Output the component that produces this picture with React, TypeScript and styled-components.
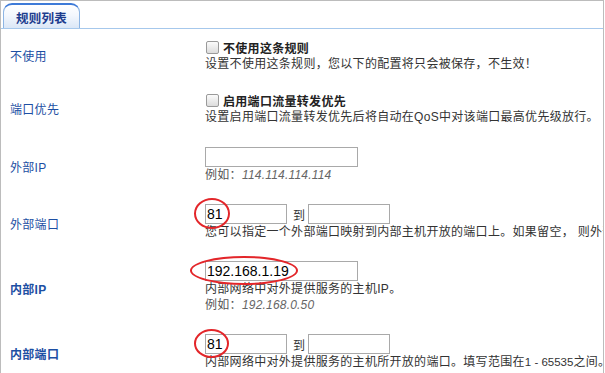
import React from "react";
import styled, { createGlobalStyle } from "styled-components";

const GlobalStyle = createGlobalStyle`
  html, body {
    margin: 0;
    padding: 0;
    background: #ffffff;
  }
  body {
    font-family: "Liberation Sans", "Noto Sans CJK SC", sans-serif;
    font-size: 12px;
  }
`;

const Panel = styled.div`
  width: 602px;
  height: 380px;
  border: 1px solid #bcbcbc;
  border-bottom: none;
  overflow: hidden;
  background: #fff;
`;

const TabBar = styled.div`
  height: 28px;
  padding: 2px 0 0 2px;
  box-sizing: border-box;
  border-bottom: 1px solid #a6c8ec;
  display: flex;
  align-items: flex-end;
`;

const Tab = styled.div`
  width: 77px;
  height: 25px;
  box-sizing: border-box;
  border: 1px solid #8db5e4;
  border-top: 2px solid #3d7ad8;
  border-bottom: none;
  border-radius: 9px 9px 0 0;
  background: linear-gradient(#ffffff 0%, #f3f7fd 45%, #dbe7f7 100%);
  display: flex;
  align-items: center;
  justify-content: center;
  padding-top: 1px;
  font-family: "Noto Sans CJK SC", sans-serif;
  font-weight: bold;
  font-size: 12.5px;
  color: #1c3c8e;
  letter-spacing: 0.3px;
`;

const Form = styled.div`
  display: grid;
  grid-template-columns: 204px 1fr;
`;

const Label = styled.div<{ $strong?: boolean; $low?: boolean }>`
  display: flex;
  align-items: center;
  padding-left: 9px;
  padding-top: ${(p) => (p.$low ? 6 : 0)}px;
  color: #1d4fa3;
  font-weight: ${(p) => (p.$strong ? "bold" : "normal")};
  letter-spacing: 0.3px;
`;

const Field = styled.div`
  padding: 9px 0;
  min-width: 0;
  white-space: nowrap;
  color: #333;
  letter-spacing: 0.3px;
`;

const Line = styled.div<{ $muted?: boolean; $h?: number }>`
  line-height: ${(p) => p.$h ?? 16}px;
  color: ${(p) => (p.$muted ? "#555" : "#333")};
`;

const CheckLine = styled.label`
  display: flex;
  align-items: center;
  gap: 4px;
  height: 18px;
  font-weight: bold;
  color: #222;
`;

const Box = styled.span`
  width: 11px;
  height: 11px;
  margin-left: 1px;
  border: 1px solid #9a9a9a;
  border-radius: 2px;
  background: linear-gradient(#fbfbfb, #dcdcdc);
`;

const Inputs = styled.div`
  display: flex;
  align-items: center;
  padding-top: 3px;
  height: 20px;
`;

const Slot = styled.span`
  position: relative;
  display: inline-flex;
`;

const TextBox = styled.input<{ $w: number }>`
  width: ${(p) => p.$w}px;
  height: 20px;
  box-sizing: border-box;
  border: 1px solid #a9a9a9;
  padding: 0 1px;
  margin: 0;
  font-family: "Liberation Sans", sans-serif;
  font-size: 14px;
  color: #000;
  background: #fff;
  outline: none;
`;

const To = styled.span`
  margin: 0 3px 0 6px;
  color: #333;
`;

const Example = styled.span`
  font-style: italic;
  color: #666;
  letter-spacing: 0.2px;
`;

const Mark = styled.span<{ $l: number; $t: number; $w: number; $h: number }>`
  position: absolute;
  left: ${(p) => p.$l}px;
  top: ${(p) => p.$t}px;
  width: ${(p) => p.$w}px;
  height: ${(p) => p.$h}px;
  box-sizing: border-box;
  border: 2.5px solid #e3262a;
  border-radius: 50%;
  pointer-events: none;
`;

const Tight = styled.span`
  letter-spacing: 0;
  font-size: 11.5px;
`;

const App: React.FC = () => {
  return (
    <>
      <GlobalStyle />
      <Panel>
        <TabBar>
          <Tab>规则列表</Tab>
        </TabBar>
        <Form>
          <Label>不使用</Label>
          <Field>
            <CheckLine>
              <Box />
              不使用这条规则
            </CheckLine>
            <Line $h={17}>设置不使用这条规则，您以下的配置将只会被保存，不生效！</Line>
          </Field>

          <Label>端口优先</Label>
          <Field>
            <CheckLine>
              <Box />
              启用端口流量转发优先
            </CheckLine>
            <Line $h={17}>设置启用端口流量转发优先后将自动在QoS中对该端口最高优先级放行。</Line>
          </Field>

          <Label $low>外部IP</Label>
          <Field>
            <Inputs>
              <TextBox $w={153} defaultValue="" />
            </Inputs>
            <Line $muted>
              例如：<Example>114.114.114.114</Example>
            </Line>
          </Field>

          <Label $low>外部端口</Label>
          <Field>
            <Inputs>
              <Slot>
                <TextBox $w={82} defaultValue="81" />
                <Mark $l={-11} $t={-6} $w={36} $h={31} />
              </Slot>
              <To>到</To>
              <TextBox $w={82} defaultValue="" />
            </Inputs>
            <Line>您可以指定一个外部端口映射到内部主机开放的端口上。如果留空， 则外部端口与内部端口相同。</Line>
          </Field>

          <Label $strong $low>内部IP</Label>
          <Field>
            <Inputs>
              <Slot>
                <TextBox $w={153} defaultValue="192.168.1.19" />
                <Mark $l={-15} $t={-5} $w={108} $h={29} />
              </Slot>
            </Inputs>
            <Line>内部网络中对外提供服务的主机IP。</Line>
            <Line $muted>
              例如：<Example>192.168.0.50</Example>
            </Line>
          </Field>

          <Label $strong $low>内部端口</Label>
          <Field>
            <Inputs>
              <Slot>
                <TextBox $w={82} defaultValue="81" />
                <Mark $l={-11} $t={-5} $w={35} $h={29} />
              </Slot>
              <To>到</To>
              <TextBox $w={82} defaultValue="" />
            </Inputs>
            <Line>
              内部网络中对外提供服务的主机所开放的端口。填写范围在<Tight>1 - 65535</Tight>之间。
            </Line>
          </Field>
        </Form>
      </Panel>
    </>
  );
};

export default App;
